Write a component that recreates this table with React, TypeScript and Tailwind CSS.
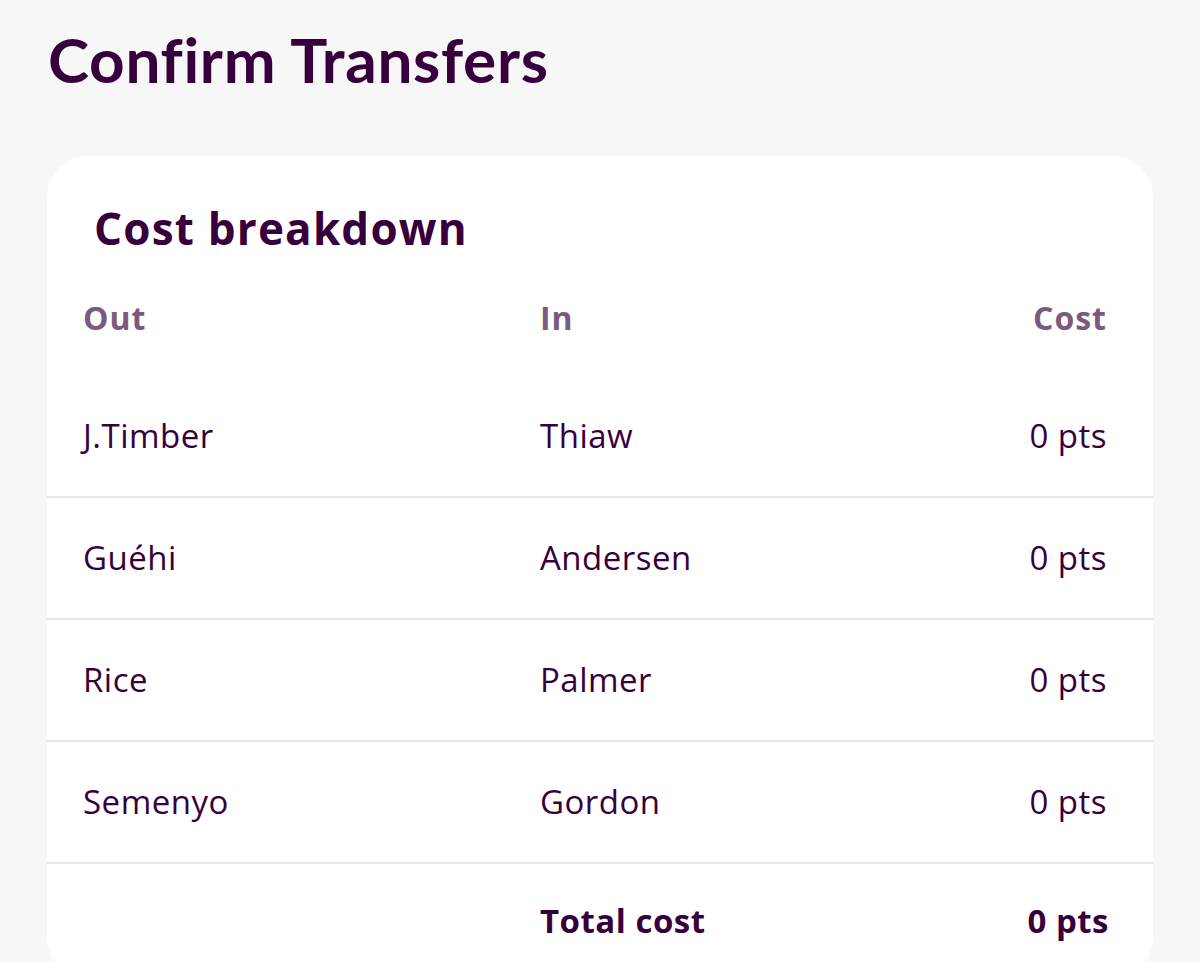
const rows = [
  { out: "J.Timber", in: "Thiaw", cost: "0 pts" },
  { out: "Guéhi", in: "Andersen", cost: "0 pts" },
  { out: "Rice", in: "Palmer", cost: "0 pts" },
  { out: "Semenyo", in: "Gordon", cost: "0 pts" },
];

export default function App() {
  return (
    <div
      className="min-h-[962px] bg-[#f7f7f8] px-[47px] pt-[20px] text-[#37003c]"
      style={{ fontFamily: "'Open Sans', Lato, sans-serif" }}
    >
      <h1
        className="pl-[1px] text-[62px] font-bold leading-[78px] tracking-[0.7px]"
        style={{ fontFamily: "Lato, sans-serif" }}
      >
        Confirm Transfers
      </h1>
      <div className="mt-[58px] rounded-[40px] bg-white pt-[40px]">
        <h2 className="pl-[47px] text-[44px] font-bold leading-[64px] tracking-[1.2px]">
          Cost breakdown
        </h2>
        <div className="grid h-[116px] grid-cols-[457px_1fr_auto] items-center pl-[36px] pr-[46px] text-[32px] font-bold tracking-[1px] text-[#7b5a80]">
          <span>Out</span>
          <span>In</span>
          <span className="text-right">Cost</span>
        </div>
        {rows.map((r) => (
          <div
            key={r.out}
            className="grid h-[122px] grid-cols-[457px_1fr_auto] items-center border-b-2 border-[#e9e6ea] pl-[36px] pr-[46px] text-[33px] tracking-[0.5px]"
          >
            <span>{r.out}</span>
            <span>{r.in}</span>
            <span className="text-right">{r.cost}</span>
          </div>
        ))}
        <div className="grid h-[114px] grid-cols-[457px_1fr_auto] items-center pl-[36px] pr-[44px] text-[33px] font-bold tracking-[0.5px]">
          <span></span>
          <span>Total cost</span>
          <span className="text-right">0 pts</span>
        </div>
      </div>
    </div>
  );
}
